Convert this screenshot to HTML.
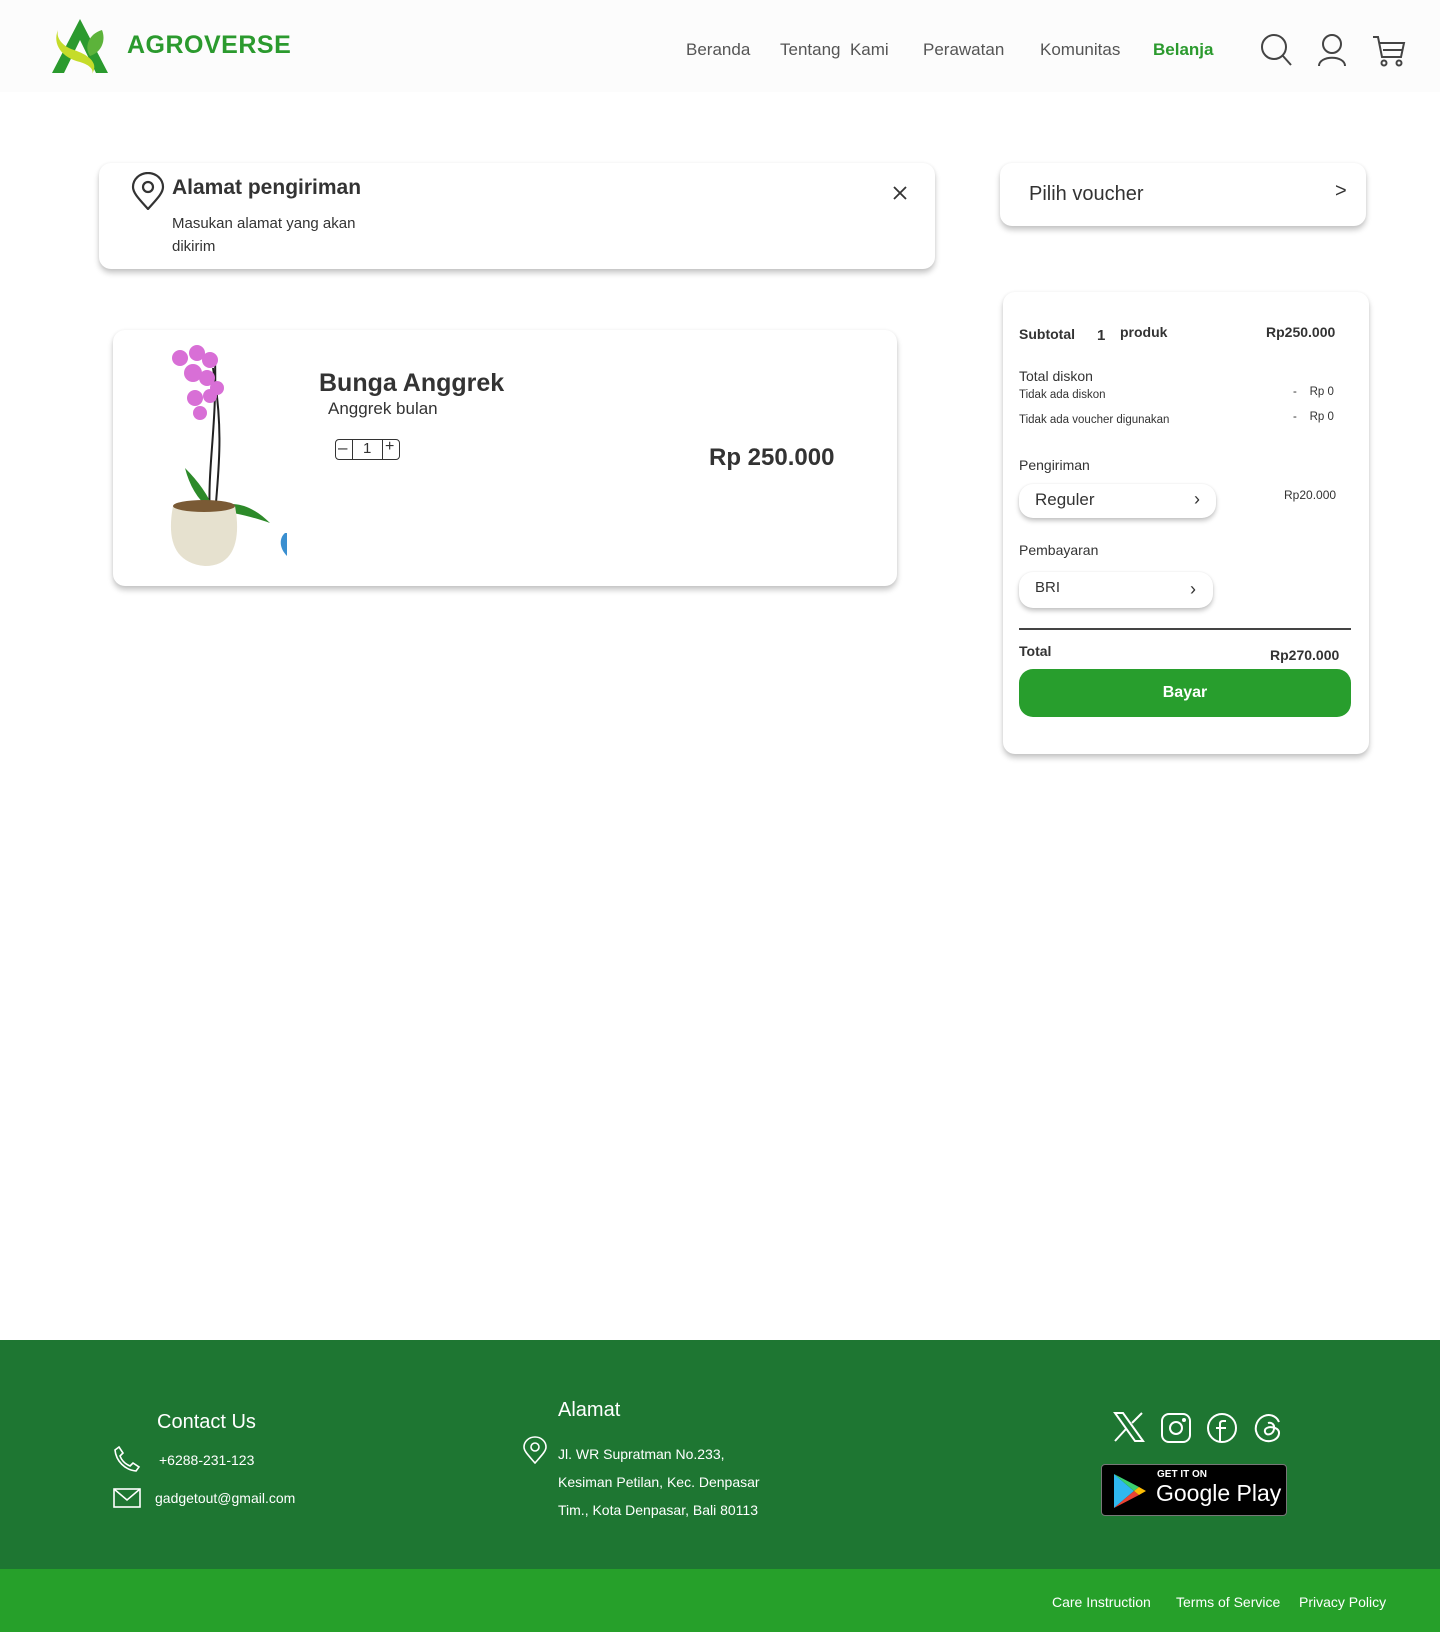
<!DOCTYPE html>
<html><head><meta charset="utf-8"><style>
*{margin:0;padding:0;box-sizing:border-box}
body{width:1440px;height:1632px;position:relative;background:#fff;font-family:"Liberation Sans",sans-serif;color:#333;overflow:hidden}
.a{position:absolute;white-space:nowrap}
.card{position:absolute;background:#fff;border-radius:12px;box-shadow:0 4px 6px rgba(0,0,0,.22),0 0 3px rgba(0,0,0,.06)}
.nav{font-size:17px;color:#555;top:40px}
.pill{position:absolute;background:#fff;border-radius:14px;box-shadow:0 3px 5px rgba(0,0,0,.22),0 0 2px rgba(0,0,0,.08)}
</style></head><body>
<div class="a" style="left:0;top:0;width:1440px;height:92px;background:#fcfcfc"></div>
<svg class="a" style="left:50px;top:18px" width="60" height="56" viewBox="0 0 60 56">
<path d="M30 1 L58 55 L46 55 L30 22 L14 55 L2 55 Z" fill="#2b9a2e"/>
<path d="M8 12 C2 26 12 40 30 44 C40 47 44 52 42 56 C50 44 36 36 24 32 C12 28 6 20 8 12Z" fill="#c5dc2a"/>
<path d="M52 12 C38 16 34 30 40 38 C52 34 56 22 52 12Z" fill="#5cb33a"/>
</svg>
<div class="a" style="left:127px;top:31px;font-size:25px;font-weight:bold;color:#2b9a2e;letter-spacing:.5px">AGROVERSE</div>
<div class="a nav" style="left:686px">Beranda</div>
<div class="a nav" style="left:780px">Tentang &nbsp;Kami</div>
<div class="a nav" style="left:923px">Perawatan</div>
<div class="a nav" style="left:1040px">Komunitas</div>
<div class="a nav" style="left:1153px;color:#2b9a2e;font-weight:bold">Belanja</div>
<svg class="a" style="left:1260px;top:33px" width="32" height="34" viewBox="0 0 32 34" fill="none" stroke="#444" stroke-width="2"><circle cx="14" cy="14" r="12"/><path d="M23 23 L31 32"/></svg>
<svg class="a" style="left:1317px;top:33px" width="30" height="34" viewBox="0 0 30 34" fill="none" stroke="#444" stroke-width="2"><circle cx="15" cy="11" r="9"/><path d="M2 33 C2 22 28 22 28 33"/></svg>
<svg class="a" style="left:1372px;top:35px" width="34" height="32" viewBox="0 0 34 32" fill="none" stroke="#444" stroke-width="2"><path d="M1 2 H6 L10 22 H29 L32 8 H8"/><circle cx="12" cy="28" r="2.5"/><circle cx="27" cy="28" r="2.5"/><path d="M11 15 H30"/></svg>

<div class="card" style="left:99px;top:163px;width:836px;height:106px"></div>
<svg class="a" style="left:131px;top:172px" width="34" height="38" viewBox="0 0 34 38" fill="none" stroke="#333" stroke-width="2.2"><path d="M17 37 C8 27 2 21 2 15 A15 14 0 0 1 32 15 C32 21 26 27 17 37Z"/><circle cx="17" cy="15" r="5"/></svg>
<div class="a" style="left:172px;top:176px;font-size:21px;font-weight:bold">Alamat pengiriman</div>
<div class="a" style="left:172px;top:212px;font-size:15px;line-height:23px">Masukan alamat yang akan<br>dikirim</div>
<svg class="a" style="left:893px;top:186px" width="14" height="14" stroke="#333" stroke-width="1.8"><path d="M1 1L13 13M13 1L1 13"/></svg>

<div class="card" style="left:1000px;top:163px;width:366px;height:63px"></div>
<div class="a" style="left:1029px;top:183px;font-size:20px">Pilih voucher</div>
<div class="a" style="left:1335px;top:180px;font-size:20px">&gt;</div>

<div class="card" style="left:113px;top:330px;width:784px;height:256px"></div>
<svg class="a" style="left:155px;top:338px" width="150" height="230" viewBox="0 0 150 230">
<path d="M55 180 C52 130 62 90 60 20" stroke="#222" stroke-width="2" fill="none"/>
<path d="M60 180 C62 140 70 100 58 30" stroke="#222" stroke-width="2" fill="none"/>
<g fill="#d86fd6"><circle cx="25" cy="20" r="8"/><circle cx="42" cy="15" r="8"/><circle cx="55" cy="22" r="8"/><circle cx="38" cy="35" r="9"/><circle cx="52" cy="40" r="8"/><circle cx="40" cy="60" r="8"/><circle cx="55" cy="58" r="7"/><circle cx="45" cy="75" r="7"/><circle cx="62" cy="50" r="7"/></g>
<path d="M30 130 C45 145 55 160 60 175 C45 165 35 150 30 130Z" fill="#2d8a2a"/>
<path d="M60 170 C80 160 100 170 115 185 C95 178 80 175 60 172Z" fill="#2d8a2a"/>
<path d="M20 168 C35 160 50 165 60 172 C45 170 30 170 20 168Z" fill="#2d8a2a"/>
<path d="M18 168 C12 200 18 225 50 228 C80 228 86 200 80 168 Z" fill="#e6e1cf"/>
<ellipse cx="49" cy="168" rx="31" ry="6" fill="#7a5a35"/>
<path d="M130 195 C124 200 124 210 132 218 L132 195Z" fill="#3a8fd0"/>
</svg>
<div class="a" style="left:319px;top:369px;font-size:25px;font-weight:bold">Bunga Anggrek</div>
<div class="a" style="left:328px;top:399px;font-size:17px">Anggrek bulan</div>
<div class="a" style="left:335px;top:439px;width:65px;height:21px;border:1.3px solid #333;border-radius:4px"></div>
<div class="a" style="left:352px;top:439px;width:1px;height:21px;background:#333"></div>
<div class="a" style="left:382px;top:439px;width:1px;height:21px;background:#333"></div>
<div class="a" style="left:338px;top:438px;font-size:17px">–</div>
<div class="a" style="left:363px;top:440px;font-size:15px">1</div>
<div class="a" style="left:385px;top:438px;font-size:16px">+</div>
<div class="a" style="left:709px;top:444px;font-size:24px;font-weight:bold">Rp 250.000</div>

<div class="card" style="left:1003px;top:292px;width:366px;height:462px"></div>
<div class="a" style="left:1019px;top:326px;font-size:14px;font-weight:bold">Subtotal</div>
<div class="a" style="left:1097px;top:327px;font-size:15px;font-weight:bold">1</div>
<div class="a" style="left:1120px;top:324px;font-size:14px;font-weight:bold">produk</div>
<div class="a" style="left:1266px;top:324px;font-size:14px;font-weight:bold">Rp250.000</div>
<div class="a" style="left:1019px;top:368px;font-size:14px">Total diskon</div>
<div class="a" style="left:1019px;top:389px;font-size:11.5px">Tidak ada diskon</div>
<div class="a" style="left:1019px;top:414px;font-size:11.5px">Tidak ada voucher digunakan</div>
<div class="a" style="left:1293px;top:386px;font-size:11.5px">-&nbsp;&nbsp;&nbsp; Rp 0</div>
<div class="a" style="left:1293px;top:411px;font-size:11.5px">-&nbsp;&nbsp;&nbsp; Rp 0</div>
<div class="a" style="left:1019px;top:457px;font-size:14px">Pengiriman</div>
<div class="pill" style="left:1019px;top:484px;width:197px;height:34px"></div>
<div class="a" style="left:1035px;top:490px;font-size:17px">Reguler</div>
<div class="a" style="left:1194px;top:489px;font-size:18px">›</div>
<div class="a" style="left:1284px;top:488px;font-size:12px">Rp20.000</div>
<div class="a" style="left:1019px;top:542px;font-size:14px">Pembayaran</div>
<div class="pill" style="left:1019px;top:572px;width:194px;height:36px"></div>
<div class="a" style="left:1035px;top:579px;font-size:15px">BRI</div>
<div class="a" style="left:1190px;top:579px;font-size:18px">›</div>
<div class="a" style="left:1019px;top:628px;width:332px;height:1.5px;background:#444"></div>
<div class="a" style="left:1019px;top:643px;font-size:14px;font-weight:bold">Total</div>
<div class="a" style="left:1270px;top:647px;font-size:14px;font-weight:bold">Rp270.000</div>
<div class="a" style="left:1019px;top:669px;width:332px;height:48px;background:#289e2d;border-radius:14px;color:#fff;font-weight:bold;font-size:16px;text-align:center;line-height:48px">Bayar</div>

<div class="a" style="left:0;top:1340px;width:1440px;height:229px;background:#1e7632"></div>
<div class="a" style="left:0;top:1569px;width:1440px;height:63px;background:#26a02a"></div>
<div class="a" style="left:157px;top:1411px;font-size:20px;color:#fff">Contact Us</div>
<svg class="a" style="left:113px;top:1445px" width="28" height="28" viewBox="0 0 28 28" fill="none" stroke="#fff" stroke-width="1.6"><path d="M6 2 L10 8 L7 11 C9 16 12 19 17 21 L20 18 L26 22 L23 26 C12 25 3 16 2 5 Z"/></svg>
<div class="a" style="left:159px;top:1452px;font-size:14px;color:#fff">+6288-231-123</div>
<svg class="a" style="left:113px;top:1488px" width="28" height="20" viewBox="0 0 28 20" fill="none" stroke="#fff" stroke-width="1.6"><rect x="1" y="1" width="26" height="18"/><path d="M1 1 L14 12 L27 1"/></svg>
<div class="a" style="left:155px;top:1490px;font-size:14px;color:#fff">gadgetout@gmail.com</div>
<div class="a" style="left:558px;top:1399px;font-size:20px;color:#fff">Alamat</div>
<svg class="a" style="left:523px;top:1436px" width="24" height="28" viewBox="0 0 24 28" fill="none" stroke="#fff" stroke-width="1.6"><path d="M12 27 C5 19 1 15 1 11 A11 10 0 0 1 23 11 C23 15 19 19 12 27Z"/><circle cx="12" cy="11" r="4"/></svg>
<div class="a" style="left:558px;top:1440px;font-size:14px;color:#fff;line-height:28px">Jl. WR Supratman No.233,<br>Kesiman Petilan, Kec. Denpasar<br>Tim., Kota Denpasar, Bali 80113</div>
<svg class="a" style="left:1113px;top:1412px" width="32" height="30" viewBox="0 0 32 30" fill="none" stroke="#fff" stroke-width="2"><path d="M2 1 H10 L30 29 H22 Z"/><path d="M2 29 L13 17 M19 11 L29 1"/></svg>
<svg class="a" style="left:1160px;top:1412px" width="32" height="32" viewBox="0 0 32 32" fill="none" stroke="#fff" stroke-width="2"><rect x="2" y="2" width="28" height="28" rx="7"/><circle cx="16" cy="16" r="6"/><circle cx="24" cy="8" r="1"/></svg>
<svg class="a" style="left:1206px;top:1412px" width="32" height="32" viewBox="0 0 32 32" fill="none" stroke="#fff" stroke-width="2"><circle cx="16" cy="16" r="14"/><path d="M20 9 H17 C15 9 14 10 14 12 V30 M10 16 H20"/></svg>
<svg class="a" style="left:1253px;top:1412px" width="32" height="32" viewBox="0 0 32 32" fill="none" stroke="#fff" stroke-width="2"><path d="M26 10 C23 3 16 2 11 4 C4 7 2 14 3 19 C5 28 14 31 21 28 C27 25 28 18 22 16 C16 14 11 16 12 20 C13 24 20 23 21 17 C22 12 18 10 15 11"/></svg>
<div class="a" style="left:1101px;top:1464px;width:186px;height:52px;background:#000;border-radius:4px;border:1px solid #777"></div>
<svg class="a" style="left:1112px;top:1472px" width="36" height="38" viewBox="0 0 36 38"><path d="M2 2 L22 19 L2 36Z" fill="#2fb8f0"/><path d="M2 2 L27 15 L22 19Z" fill="#3bd16f"/><path d="M2 36 L27 23 L22 19Z" fill="#ea4335"/><path d="M27 15 L34 19 L27 23 L22 19Z" fill="#fbbc04"/></svg>
<div class="a" style="left:1157px;top:1469px;font-size:10px;color:#fff;font-weight:bold">GET IT ON</div>
<div class="a" style="left:1156px;top:1480px;font-size:23px;color:#fff">Google Play</div>
<div class="a" style="left:1052px;top:1594px;font-size:14px;color:#fff">Care Instruction</div>
<div class="a" style="left:1176px;top:1594px;font-size:14px;color:#fff">Terms of Service</div>
<div class="a" style="left:1299px;top:1594px;font-size:14px;color:#fff">Privacy Policy</div>
</body></html>
